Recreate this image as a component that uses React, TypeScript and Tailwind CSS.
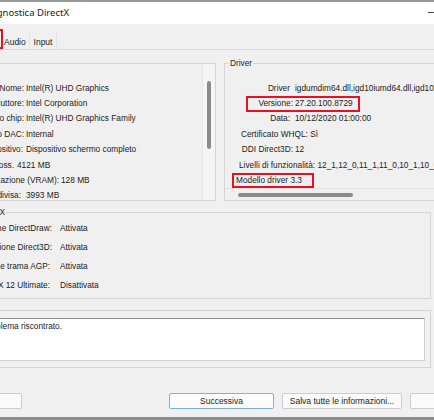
type Row = { label: string; value: string; labelClass: string }

const deviceRows: Row[] = [
  { label: "Nome:", value: "Intel(R) UHD Graphics", labelClass: "w-[26px] pr-[2px]" },
  { label: "Produttore:", value: "Intel Corporation", labelClass: "w-[26px] pr-[2px]" },
  { label: "Tipo chip:", value: "Intel(R) UHD Graphics Family", labelClass: "w-[26px] pr-[2px]" },
  { label: "Tipo DAC:", value: "Internal", labelClass: "w-[26px] pr-[2px]" },
  { label: "Tipo dispositivo:", value: "Dispositivo schermo completo", labelClass: "w-[26px] pr-[3px]" },
  { label: "Memoria totale appross.", value: "4121 MB", labelClass: "w-[17px] pr-[3px]" },
  { label: "Memoria di visualizzazione (VRAM):", value: "128 MB", labelClass: "w-[61px] pr-[2px]" },
  { label: "Memoria condivisa:", value: "3993 MB", labelClass: "w-[26px] pr-[5px]" },
]

const featureRows: Row[] = [
  { label: "Accelerazione DirectDraw:", value: "Attivata", labelClass: "w-[69px] pr-[8px]" },
  { label: "Accelerazione Direct3D:", value: "Attivata", labelClass: "w-[69px] pr-[8px]" },
  { label: "Accelerazione trama AGP:", value: "Attivata", labelClass: "w-[69px] pr-[10px]" },
  { label: "DirectX 12 Ultimate:", value: "Disattivata", labelClass: "w-[69px] pr-[10px]" },
]

// label box ends where the value starts; text that does not fit runs off to the left
function LabelRow({ row, height }: { row: Row; height: string }) {
  return (
    <div className={`flex items-center whitespace-nowrap ${height}`}>
      <div className={`flex shrink-0 justify-end ${row.labelClass}`}>
        <span className="shrink-0">{row.label}</span>
      </div>
      <span>{row.value}</span>
    </div>
  )
}

export default function App() {
  return (
    <div className="flex h-[420px] w-[434px] flex-col overflow-hidden bg-[#f0f0f0] font-['Liberation_Sans',Arial,sans-serif] text-[8.3px] leading-none text-[#1c1c1c]">
      {/* window frame + title bar */}
      <div className="h-[2px] shrink-0 bg-[#979797]" />
      <div className="flex h-[22px] shrink-0 items-center bg-white pb-[1px]">
        <div className="flex w-[69px] shrink-0 justify-end">
          <span className="shrink-0 whitespace-nowrap font-['Noto_Sans',sans-serif] text-[9.5px] text-[#1a1a1a]">
            Diagnostica DirectX
          </span>
        </div>
        <div className="ml-auto h-[1px] w-[6px] bg-[#4a4a4a]" />
      </div>

      {/* tabs */}
      <div className="flex h-[26px] shrink-0 items-end border-b border-[#dadada] text-[8.5px]">
        <div className="ml-[-60px] flex h-[20px] w-[63px] shrink-0 items-center justify-center border-2 border-[#e81123]">
          Schermo
        </div>
        <div className="mb-[-1px] flex h-[17px] w-[26px] items-center pl-[1px] pt-[1px]">Audio</div>
        <div className="mb-[-1px] flex h-[17px] w-[28px] items-center justify-center border-x border-[#e2e2e2] pt-[1px]">
          Input
        </div>
      </div>

      {/* device + driver */}
      <div className="mt-[13px] flex h-[138px] shrink-0">
        <div className="flex w-[216px] shrink-0 border-y border-r border-[#d6d6d6]">
          <div className="flex-1 overflow-hidden pt-[16px]">
            {deviceRows.map((r) => (
              <LabelRow key={r.label} row={r} height="h-[15.4px]" />
            ))}
          </div>
          <div className="w-[13px] shrink-0 border-l border-[#e6e6e6] bg-[#f5f5f5]">
            <div className="mx-auto mt-[17px] h-[68px] w-[4px] rounded-full bg-[#8b8b8b]" />
          </div>
        </div>

        <div className="relative ml-[8px] flex w-[212px] shrink-0 flex-col border border-[#d6d6d6]">
          <span className="absolute left-[4px] top-[-5px] bg-[#f0f0f0] px-[1px]">Driver</span>
          <div className="flex-1 overflow-hidden pt-[16px]">
            <LabelRow row={{ label: "Driver", value: "igdumdim64.dll,igd10iumd64.dll,igd10iumd64.dll,igd12umd64.dll", labelClass: "w-[70px] pr-[5px]" }} height="h-[15.4px]" />
            <div className="relative">
              <LabelRow row={{ label: "Versione:", value: "27.20.100.8729", labelClass: "w-[70px] pr-[2px]" }} height="h-[15.4px]" />
              <div className="absolute left-[21px] top-[1px] h-[16px] w-[114px] border-2 border-[#e81123]" />
            </div>
            <LabelRow row={{ label: "Data:", value: "10/12/2020 01:00:00", labelClass: "w-[70px] pr-[5px]" }} height="h-[15.4px]" />
            <div className="flex h-[15.4px] items-center whitespace-nowrap pl-[16px]">Certificato WHQL: Sì</div>
            <LabelRow row={{ label: "DDI Direct3D:", value: "12", labelClass: "w-[70px] pr-[2px]" }} height="h-[15.4px]" />
            <div className="flex h-[15.4px] items-center whitespace-nowrap pl-[14px]">
              Livelli di funzionalità: 12_1,12_0,11_1,11_0,10_1,10_0,9_3,9_2,9_1
            </div>
            <div className="relative flex h-[15.4px] items-center whitespace-nowrap pl-[11px]">
              Modello driver 3.3
              <div className="absolute left-[7px] top-[1px] h-[15px] w-[82px] border-2 border-[#e81123]" />
            </div>
          </div>
          <div className="h-[12px] shrink-0 border-t border-[#e4e4e4]">
            <div className="ml-[13px] mt-[4px] h-[4px] w-[115px] rounded-full bg-[#8b8b8b]" />
          </div>
        </div>
      </div>

      {/* DirectX features */}
      <div className="relative ml-[-10px] mt-[11px] h-[87px] w-[441px] shrink-0 border border-[#d6d6d6] pt-[5px]">
        <div className="absolute left-0 top-[-5px] flex w-[15px] justify-end">
          <span className="shrink-0 whitespace-nowrap bg-[#f0f0f0] pr-[1px]">Funzionalità DirectX</span>
        </div>
        {featureRows.map((r) => (
          <LabelRow key={r.label} row={r} height="h-[19.3px]" />
        ))}
      </div>

      {/* notes */}
      <div className="ml-[-10px] mt-[11px] h-[58px] w-[441px] shrink-0 border border-[#d6d6d6] pt-[7px] pr-[5px]">
        <div className="h-[43px] border border-[#d2d2d2] border-t-[#8e8e8e] bg-white">
          <div className="flex w-[70px] justify-end pt-[3px]">
            <span className="shrink-0 whitespace-nowrap">Nessun problema riscontrato.</span>
          </div>
        </div>
      </div>

      {/* buttons */}
      <div className="mt-[25px] flex h-[16px] shrink-0 text-[8.5px]">
        <div className="ml-[-58px] flex w-[80px] shrink-0 items-center justify-center rounded-[2px] border border-[#cdcdcd] bg-[#fbfbfb]">
          Guida
        </div>
        <div className="ml-[147px] flex w-[105px] shrink-0 items-center justify-center rounded-[2px] border border-[#7db1e6] bg-[#fcfcfc]">
          Successiva
        </div>
        <div className="ml-[8px] flex w-[120px] shrink-0 items-center justify-center rounded-[2px] border border-[#cdcdcd] bg-[#fbfbfb]">
          Salva tutte le informazioni...
        </div>
        <div className="ml-[8px] flex w-[100px] shrink-0 items-center justify-center rounded-[2px] border border-[#cdcdcd] bg-[#fbfbfb]">
          Esci
        </div>
      </div>
      <div className="mt-[8px] h-[3px] shrink-0 bg-[#8d8d8d]" />
    </div>
  )
}
